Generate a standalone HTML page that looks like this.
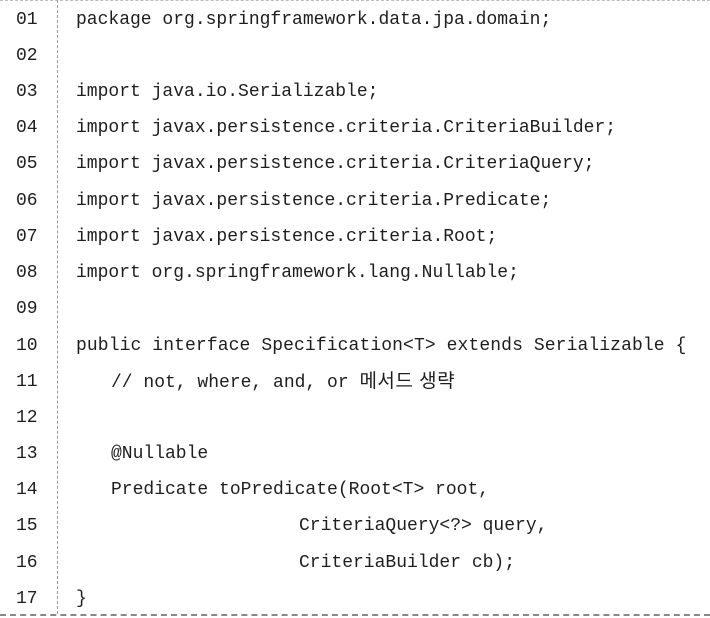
<!DOCTYPE html>
<html><head><meta charset="utf-8"><style>
html,body{margin:0;padding:0;background:#fff;}
body{width:710px;height:618px;position:relative;overflow:hidden;font-family:"Liberation Mono","Noto Sans CJK KR",monospace;font-size:18px;color:#1e1e1e;}
.n{position:absolute;left:16px;width:30px;line-height:22px;}
.c{position:absolute;line-height:22px;white-space:pre;}
.k{font-family:"Liberation Sans","Noto Sans CJK KR",sans-serif;font-size:19px;letter-spacing:0.5px;}
#v{position:absolute;left:57px;top:0;height:614px;border-left:1px dashed #999;}
#b{position:absolute;left:0;top:614px;width:710px;border-top:2px dashed #888;}
#t{position:absolute;left:0;top:0;width:710px;border-top:1px dashed #bbb;}
</style></head><body>
<div id="t"></div><div id="v"></div><div id="b"></div>
<div class="n" style="top:9px">01</div><div class="c" style="left:76px;top:9px">package org.springframework.data.jpa.domain;</div>
<div class="n" style="top:45px">02</div>
<div class="n" style="top:81px">03</div><div class="c" style="left:76px;top:81px">import java.io.Serializable;</div>
<div class="n" style="top:117px">04</div><div class="c" style="left:76px;top:117px">import javax.persistence.criteria.CriteriaBuilder;</div>
<div class="n" style="top:153px">05</div><div class="c" style="left:76px;top:153px">import javax.persistence.criteria.CriteriaQuery;</div>
<div class="n" style="top:190px">06</div><div class="c" style="left:76px;top:190px">import javax.persistence.criteria.Predicate;</div>
<div class="n" style="top:226px">07</div><div class="c" style="left:76px;top:226px">import javax.persistence.criteria.Root;</div>
<div class="n" style="top:262px">08</div><div class="c" style="left:76px;top:262px">import org.springframework.lang.Nullable;</div>
<div class="n" style="top:298px">09</div>
<div class="n" style="top:335px">10</div><div class="c" style="left:76px;top:335px;letter-spacing:0.1px">public interface Specification&lt;T&gt; extends Serializable {</div>
<div class="n" style="top:371px">11</div><div class="c" style="left:111px;top:371px">// not, where, and, or <span class="k">메서드 생략</span></div>
<div class="n" style="top:407px">12</div>
<div class="n" style="top:443px">13</div><div class="c" style="left:111px;top:443px">@Nullable</div>
<div class="n" style="top:479px">14</div><div class="c" style="left:111px;top:479px">Predicate toPredicate(Root&lt;T&gt; root,</div>
<div class="n" style="top:515px">15</div><div class="c" style="left:299px;top:515px">CriteriaQuery&lt;?&gt; query,</div>
<div class="n" style="top:552px">16</div><div class="c" style="left:299px;top:552px">CriteriaBuilder cb);</div>
<div class="n" style="top:588px">17</div><div class="c" style="left:76px;top:588px">}</div>
</body></html>
